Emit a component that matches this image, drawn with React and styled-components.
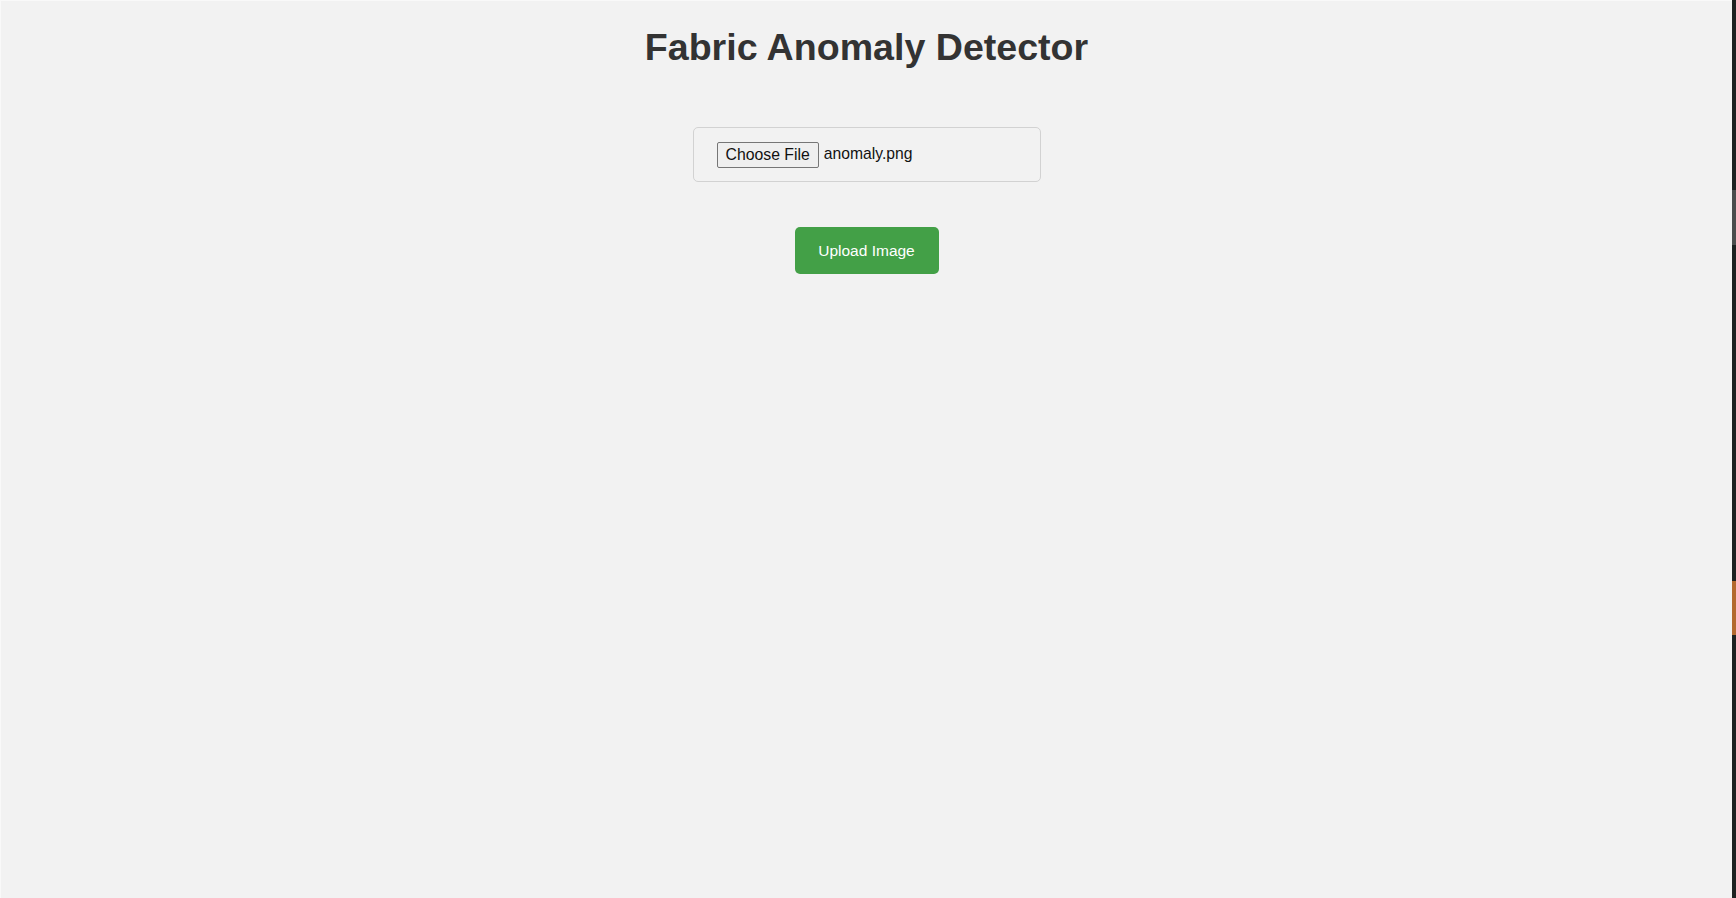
import React from "react";
import styled, { createGlobalStyle } from "styled-components";

const GlobalStyle = createGlobalStyle`
  html, body {
    margin: 0;
    padding: 0;
    background: #f2f2f2;
    font-family: "Liberation Sans", Arial, sans-serif;
  }
  #root { min-height: 100vh; }
`;

const Shell = styled.div`
  display: flex;
  min-height: 100vh;
`;

const Main = styled.main`
  flex: 1;
  display: flex;
  flex-direction: column;
  align-items: center;
  background: #f2f2f2;
  border-top: 1px solid #f9f9f9;
  border-left: 1px solid #f9f9f9;
  padding-top: 25px;
`;

const Title = styled.h1`
  margin: 0;
  font-family: "Liberation Sans", Arial, sans-serif;
  font-weight: 700;
  font-size: 37.6px;
  line-height: 42px;
  color: #333333;
`;

const UploadBox = styled.div`
  margin-top: 59px;
  box-sizing: border-box;
  width: 348px;
  height: 55px;
  padding: 0 23px;
  display: flex;
  align-items: center;
  gap: 5px;
  border: 1px solid #d2d2d2;
  border-radius: 5px;
  background: #f2f2f2;
`;

const FileButton = styled.button`
  box-sizing: border-box;
  height: 26px;
  padding: 0 8px;
  font-family: "Liberation Sans", Arial, sans-serif;
  font-size: 15.8px;
  color: #111;
  background: #efefef;
  border: 1px solid #767676;
  border-radius: 2px;
  cursor: pointer;
`;

const FileName = styled.span`
  font-family: "Liberation Sans", Arial, sans-serif;
  font-size: 15.7px;
  color: #111;
  margin-top: -1px;
`;

const UploadButton = styled.button`
  margin-top: 45px;
  width: 144px;
  height: 47px;
  border: none;
  border-radius: 5px;
  background: #43a047;
  color: #ffffff;
  font-family: "Liberation Sans", Arial, sans-serif;
  font-size: 15.5px;
  padding: 1px 0 0;
  cursor: pointer;
`;

const Rail = styled.aside`
  position: relative;
  width: 4px;
  flex-shrink: 0;
  background: #1d2221;
`;

const Thumb = styled.div`
  position: absolute;
  left: 0;
  width: 4px;
  top: ${(p) => p.$top}px;
  height: ${(p) => p.$h}px;
  background: ${(p) => p.$color};
`;

export default function App() {
  return (
    <>
      <GlobalStyle />
      <Shell>
        <Main>
          <Title>Fabric Anomaly Detector</Title>
          <UploadBox>
            <FileButton type="button">Choose File</FileButton>
            <FileName>anomaly.png</FileName>
          </UploadBox>
          <UploadButton type="button">Upload Image</UploadButton>
        </Main>
        <Rail>
          <Thumb $top={190} $h={55} $color="#4b4d4d" />
          <Thumb $top={581} $h={54} $color="#b3692f" />
        </Rail>
      </Shell>
    </>
  );
}
